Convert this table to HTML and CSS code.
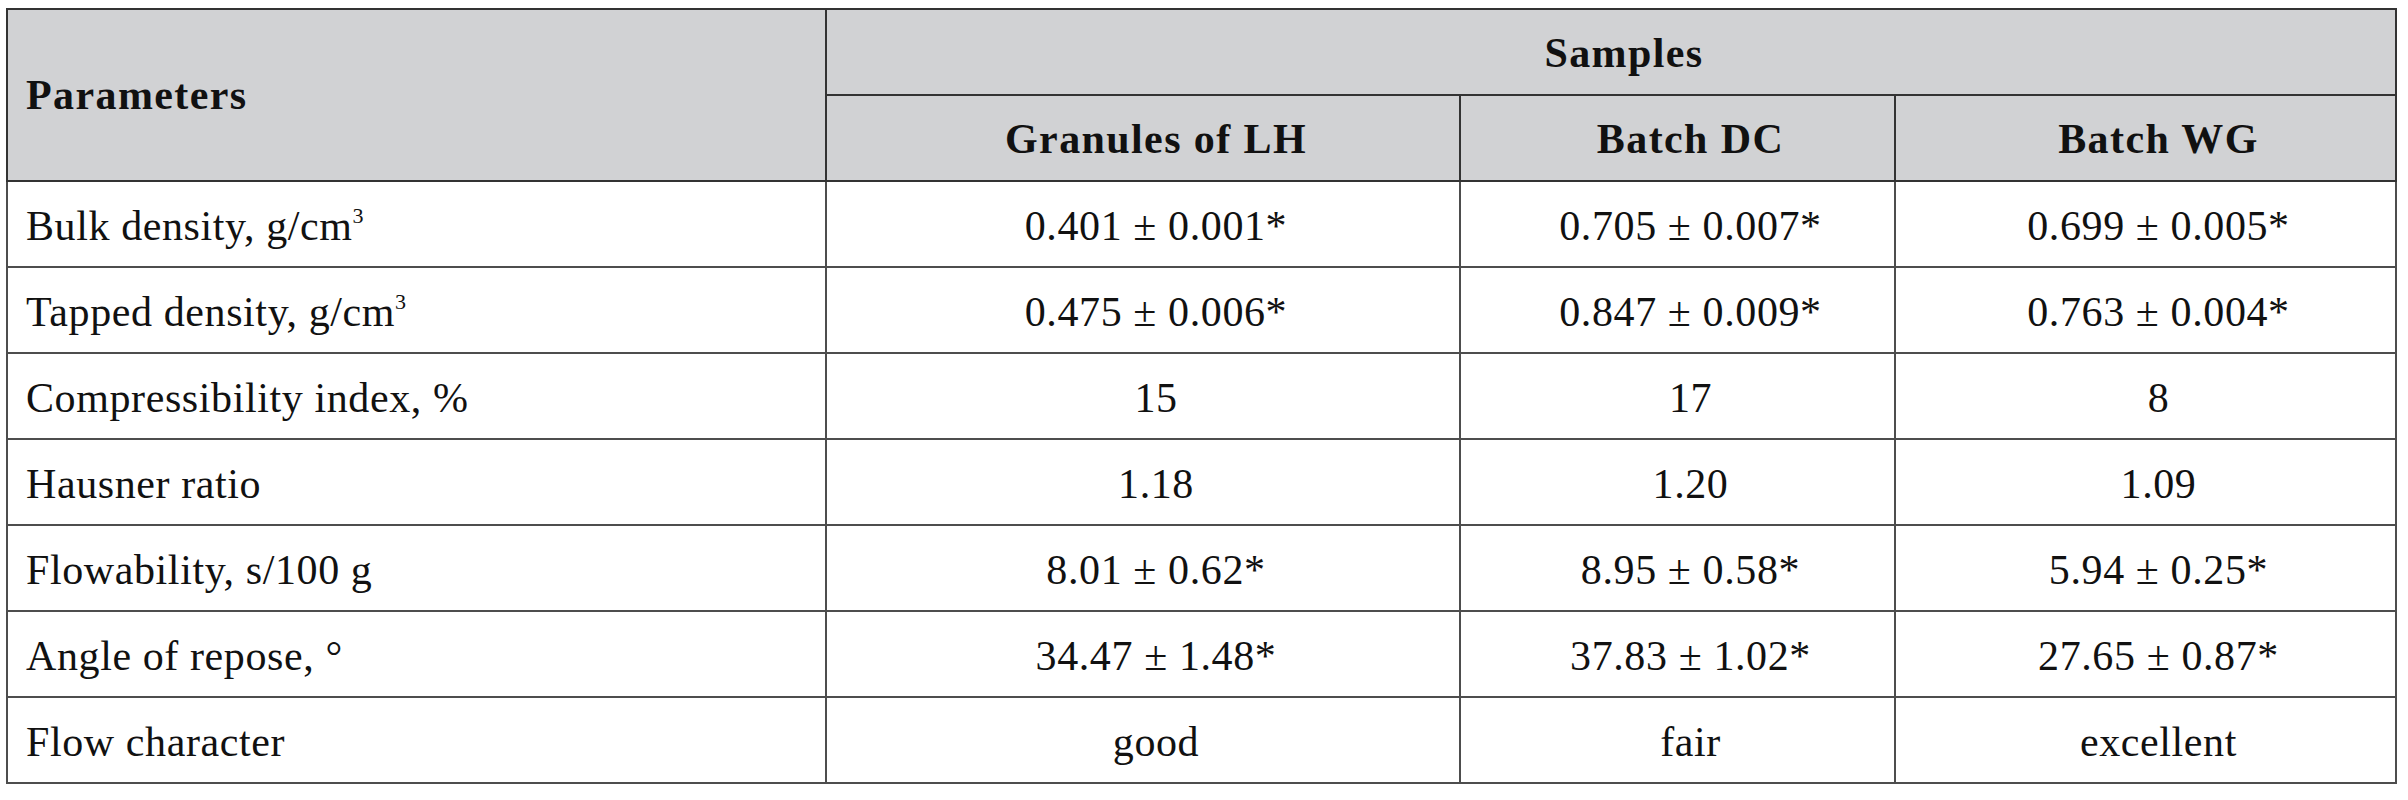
FILE: index.html
```html
<!DOCTYPE html>
<html lang="en">
<head>
<meta charset="utf-8">
<title>Flow properties</title>
<link rel="stylesheet" href="styles.css">
</head>
<body>
<table class="data-table">
  <colgroup>
    <col class="col-param">
    <col class="col-lh">
    <col class="col-dc">
    <col class="col-wg">
  </colgroup>
  <thead>
    <tr class="head-row">
      <th class="param-head" rowspan="2">Parameters</th>
      <th class="group-head" colspan="3">Samples</th>
    </tr>
    <tr class="head-row">
      <th class="sample-head">Granules of LH</th>
      <th class="sample-head">Batch DC</th>
      <th class="sample-head">Batch WG</th>
    </tr>
  </thead>
  <tbody>
    <tr class="body-row">
      <td class="param">Bulk density, g/cm<span class="sup">3</span></td>
      <td class="val">0.401 ± 0.001*</td>
      <td class="val">0.705 ± 0.007*</td>
      <td class="val">0.699 ± 0.005*</td>
    </tr>
    <tr class="body-row">
      <td class="param">Tapped density, g/cm<span class="sup">3</span></td>
      <td class="val">0.475 ± 0.006*</td>
      <td class="val">0.847 ± 0.009*</td>
      <td class="val">0.763 ± 0.004*</td>
    </tr>
    <tr class="body-row">
      <td class="param">Compressibility index, %</td>
      <td class="val">15</td>
      <td class="val">17</td>
      <td class="val">8</td>
    </tr>
    <tr class="body-row">
      <td class="param">Hausner ratio</td>
      <td class="val">1.18</td>
      <td class="val">1.20</td>
      <td class="val">1.09</td>
    </tr>
    <tr class="body-row">
      <td class="param">Flowability, s/100 g</td>
      <td class="val">8.01 ± 0.62*</td>
      <td class="val">8.95 ± 0.58*</td>
      <td class="val">5.94 ± 0.25*</td>
    </tr>
    <tr class="body-row">
      <td class="param">Angle of repose, °</td>
      <td class="val">34.47 ± 1.48*</td>
      <td class="val">37.83 ± 1.02*</td>
      <td class="val">27.65 ± 0.87*</td>
    </tr>
    <tr class="body-row">
      <td class="param">Flow character</td>
      <td class="val">good</td>
      <td class="val">fair</td>
      <td class="val">excellent</td>
    </tr>
  </tbody>
</table>
</body>
</html>
```
FILE: styles.css
```css
html, body {
  margin: 0;
  padding: 0;
  background: #ffffff;
}

body {
  font-family: "Liberation Serif", "Times New Roman", serif;
  color: #111111;
}

.data-table {
  margin: 8px 0 0 6px;
  width: 2389px;
  border-collapse: collapse;
  table-layout: fixed;
  border: 2px solid #555555;
}

.col-param { width: 819px; }
.col-lh { width: 634px; }
.col-dc { width: 435px; }
.col-wg { width: 501px; }

.head-row th {
  background: #d1d2d4;
  font-weight: bold;
  font-size: 42px;
  letter-spacing: 1.4px;
  border: 2px solid #333333;
  padding: 0;
  vertical-align: middle;
  line-height: 1;
}

.head-row {
  height: 86px;
}

.param-head {
  text-align: left;
  padding-left: 18px !important;
  letter-spacing: 0.6px;
}

.group-head,
.sample-head {
  text-align: center;
  padding: 1px 0 0 26px !important;
}

.body-row {
  height: 86px;
}

.body-row td {
  font-size: 42px;
  letter-spacing: 0.6px;
  border: 2px solid #4d4d4d;
  vertical-align: middle;
  line-height: 1;
  padding: 4px 0 0 0;
}

.param {
  text-align: left;
  padding-left: 18px !important;
}

.val {
  text-align: center;
  padding-left: 26px !important;
}

.sup {
  font-size: 22px;
  position: relative;
  top: -17px;
  letter-spacing: 0;
}
```
